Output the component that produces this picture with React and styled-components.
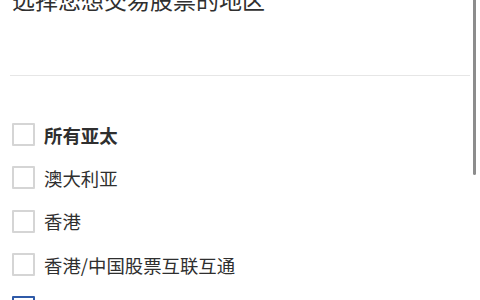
import React from "react";
import styled, { createGlobalStyle } from "styled-components";

const Global = createGlobalStyle`
  html, body { margin: 0; padding: 0; background: #fff; }
  body { font-family: "Noto Sans CJK SC", "Noto Sans", sans-serif; color: #2f2f2f; overflow: hidden; }
`;

const Page = styled.div`
  position: relative;
  width: 480px;
  height: 300px;
  overflow: hidden;
  background: #fff;
`;

const Panel = styled.div`
  padding: 0 10px 0 12px;
  display: flex;
  flex-direction: column;
`;

const Title = styled.h2`
  margin: -15px 0 0 0;
  font-size: 23px;
  line-height: 28px;
  font-weight: 400;
  color: #2f2f2f;
`;

const Divider = styled.hr`
  margin: 62px 0 0 -2px;
  border: none;
  height: 1px;
  background: #e6e6e6;
  width: 460px;
`;

const List = styled.ul`
  list-style: none;
  margin: 37px 0 0 0;
  padding: 0;
  display: flex;
  flex-direction: column;
`;

const Row = styled.li`
  display: flex;
  align-items: center;
  gap: 9px;
  height: 43.3px;
`;

const Box = styled.span`
  box-sizing: border-box;
  width: 23px;
  height: 23px;
  border: 2px solid ${(p) => (p.$active ? "#2f5aa8" : "#d5d5d5")};
  border-radius: 1px;
  flex: none;
`;

const Label = styled.span`
  font-size: 18.4px;
  line-height: 24px;
  font-weight: ${(p) => (p.$bold ? 700 : 400)};
  color: #2f2f2f;
`;

const Scrollbar = styled.div`
  position: absolute;
  top: 0;
  left: 473px;
  width: 3px;
  height: 175px;
  background: #8c8c8c;
  border-radius: 0 0 2px 2px;
`;

const items = [
  { label: "所有亚太", bold: true },
  { label: "澳大利亚" },
  { label: "香港" },
  { label: "香港/中国股票互联互通" },
  { label: "日本", active: true },
];

export default function App() {
  return (
    <>
      <Global />
      <Page>
        <Panel>
          <Title>选择您想交易股票的地区</Title>
          <Divider />
          <List>
            {items.map((it) => (
              <Row key={it.label}>
                <Box $active={it.active} />
                <Label $bold={it.bold}>{it.label}</Label>
              </Row>
            ))}
          </List>
        </Panel>
        <Scrollbar />
      </Page>
    </>
  );
}
